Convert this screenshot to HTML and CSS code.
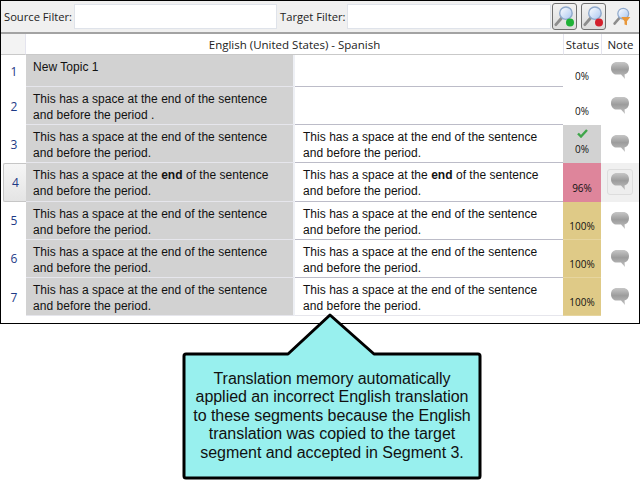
FILE: index.html
```html
<!DOCTYPE html>
<html lang="en">
<head>
  <meta charset="UTF-8" />
  <title>Translation segments</title>
  <link rel="stylesheet" href="styles.css">
</head>
<body>
  <svg class="defs" width="0" height="0">
    <defs>
      <linearGradient id="bubbleFill" x1="0" y1="0" x2="0" y2="1">
        <stop offset="0" stop-color="#c6c6c6" />
        <stop offset="0.45" stop-color="#9c9c9c" />
        <stop offset="0.8" stop-color="#b4b4b4" />
        <stop offset="1" stop-color="#c8c8c8" />
      </linearGradient>
      <linearGradient id="lensFill" x1="0" y1="0" x2="1" y2="1">
        <stop offset="0" stop-color="#ffffff" />
        <stop offset="1" stop-color="#a9c6f0" />
      </linearGradient>
      <symbol id="bubble" viewBox="0 0 20 20">
        <path d="M7 1h6c3.800 0 6 2.500 6 6.200 0 3.400-2 5.600-4.500 6.200L15 18l-4-4.400H7c-3.800 0-6-2.800-6-6.400C1 3.500 3.200 1 7 1z" fill="url(#bubbleFill)" />
      </symbol>
      <symbol id="lens" viewBox="0 0 24 24">
        <path d="M9 13L3 20" stroke="#8d8d8d" stroke-width="3" stroke-linecap="round" />
        <circle cx="13.500" cy="8" r="6.500" fill="url(#lensFill)" stroke="#8fa9cc" stroke-width="1.500" />
      </symbol>
    </defs>
  </svg>

  <div class="app">
    <div class="toolbar">
      <label class="filter-label">Source Filter:</label>
      <div class="filter-input source-input"></div>
      <label class="filter-label target-label">Target Filter:</label>
      <div class="filter-input target-input"></div>
      <button class="tool-btn">
        <svg width="24" height="24"><use href="#lens" /><circle cx="17" cy="17.500" r="4" fill="#1eb136" /></svg>
      </button>
      <button class="tool-btn">
        <svg width="24" height="24"><use href="#lens" /><circle cx="17" cy="17.500" r="4" fill="#d3202c" /></svg>
      </button>
      <span class="tool-plain">
        <svg width="20" height="20" viewBox="0 0 24 24"><use href="#lens" /><path d="M11 12h11l-4 5v5l-3-1v-4z" fill="#e8973a" /></svg>
      </span>
    </div>

    <div class="grid">
      <div class="head-gutter"></div>
      <div class="head-title">English (United States) - Spanish</div>
      <div class="head-status">Status</div>
      <div class="head-note">Note</div>

      <div class="row row-short">
        <div class="num">1</div>
        <div class="src">New Topic 1</div>
        <div class="tgt"></div>
        <div class="status"><span class="pct">0%</span></div>
        <div class="note"><svg class="bubble"><use href="#bubble" /></svg></div>
      </div>

      <div class="row">
        <div class="num">2</div>
        <div class="src">This has a space at the end of the sentence and before the period .</div>
        <div class="tgt"></div>
        <div class="status"><span class="pct">0%</span></div>
        <div class="note"><svg class="bubble"><use href="#bubble" /></svg></div>
      </div>

      <div class="row">
        <div class="num">3</div>
        <div class="src">This has a space at the end of the sentence and before the period.</div>
        <div class="tgt">This has a space at the end of the sentence and before the period.</div>
        <div class="status st-grey">
          <svg class="check" width="11" height="9" viewBox="0 0 11 9"><path d="M1 4.500l3 3L10 1" fill="none" stroke="#3fa64a" stroke-width="2.400" /></svg>
          <span class="pct">0%</span>
        </div>
        <div class="note"><svg class="bubble"><use href="#bubble" /></svg></div>
      </div>

      <div class="row row-current">
        <div class="num">4</div>
        <div class="src">This has a space at the <b>end</b> of the sentence and before the period.</div>
        <div class="tgt">This has a space at the <b>end</b> of the sentence and before the period.</div>
        <div class="status st-pink"><span class="pct">96%</span></div>
        <div class="note"><span class="note-box"><svg class="bubble"><use href="#bubble" /></svg></span></div>
      </div>

      <div class="row">
        <div class="num">5</div>
        <div class="src">This has a space at the end of the sentence and before the period.</div>
        <div class="tgt">This has a space at the end of the sentence and before the period.</div>
        <div class="status st-gold"><span class="pct">100%</span></div>
        <div class="note"><svg class="bubble"><use href="#bubble" /></svg></div>
      </div>

      <div class="row">
        <div class="num">6</div>
        <div class="src">This has a space at the end of the sentence and before the period.</div>
        <div class="tgt">This has a space at the end of the sentence and before the period.</div>
        <div class="status st-gold"><span class="pct">100%</span></div>
        <div class="note"><svg class="bubble"><use href="#bubble" /></svg></div>
      </div>

      <div class="row row-last">
        <div class="num">7</div>
        <div class="src">This has a space at the end of the sentence and before the period.</div>
        <div class="tgt">This has a space at the end of the sentence and before the period.</div>
        <div class="status st-gold"><span class="pct">100%</span></div>
        <div class="note"><svg class="bubble"><use href="#bubble" /></svg></div>
      </div>
    </div>
  </div>

  <div class="callout">
    <svg class="callout-shape" width="304" height="172" viewBox="0 0 304 172">
      <path d="M6 42H108L150 3L194 42H298a2 2 0 0 1 2 2V164a2 2 0 0 1-2 2H6a2 2 0 0 1-2-2V44a2 2 0 0 1 2-2z" fill="#98f0ee" stroke="#000" stroke-width="3" stroke-linejoin="round" />
    </svg>
    <p class="callout-text">Translation memory automatically applied an incorrect English translation to these segments because the English translation was copied to the target segment and accepted in Segment 3.</p>
  </div>
</body>
</html>
```

FILE: styles.css
```css
* { box-sizing: border-box; }
html, body {
  margin: 0;
  padding: 0;
  background: #fff;
  overflow: hidden;
}
body {
  width: 640px;
  height: 488px;
  position: relative;
  font-family: 'Liberation Sans', Arial, sans-serif;
  color: #111;
}
.defs { position: absolute; }

.app {
  height: 324px;
  border: 1px solid #000;
  background: #fff;
}

/* filter bar */
.toolbar {
  height: 33px;
  display: flex;
  align-items: center;
  background: #f0f0f0;
  border-bottom: 2px solid #a3a3a3;
  padding-left: 3px;
  font-family: 'Open Sans', sans-serif;
  font-size: 11.2px;
}
.filter-label { color: #222; }
.filter-input {
  height: 25px;
  background: #fff;
  border: 1px solid #dfe3ea;
}
.source-input { width: 203px; margin-left: 2px; }
.target-label { margin-left: 3px; }
.target-input { width: 204px; margin-left: 2px; }
.tool-btn {
  width: 25px;
  height: 27px;
  margin-left: 1px;
  padding: 0;
  display: flex;
  align-items: center;
  justify-content: center;
  background: linear-gradient(#f2f2f2, #dcdcdc);
  border: 1px solid #707070;
  border-radius: 3px;
}
.tool-btn + .tool-btn { margin-left: 4px; }
.tool-plain { margin-left: 6px; display: flex; }

/* segment table */
.grid {
  display: grid;
  grid-template-columns: 24px 538px 38px 38px;
}
.head-gutter, .head-title, .head-status, .head-note {
  height: 21px;
  display: flex;
  align-items: center;
  justify-content: center;
  font-family: 'Open Sans', sans-serif;
  font-size: 11.5px;
  color: #222;
  border-bottom: 1px solid #c9c9c9;
}
.head-gutter { background: #f3f3f3; }
.head-title, .head-status, .head-note { border-left: 1px solid #e4e4ee; }

.row {
  grid-column: 1 / -1;
  display: grid;
  grid-template-columns: 25px 269px 268px 38px 38px;
  height: 38.2px;
}
.row-short { height: 32px; }
.num {
  display: flex;
  align-items: center;
  justify-content: center;
  padding-left: 1px;
  font-family: 'Open Sans', sans-serif;
  font-size: 12px;
  color: #1d3a86;
}
.src, .tgt {
  padding: 4px 20px 0 7px;
  font-size: 12px;
  line-height: 16px;
  letter-spacing: 0.03px;
  border-bottom: 1px solid #bcbcc8;
}
.src {
  background: #d2d2d2;
  border-right: 2px solid #eef0f5;
  border-bottom-color: #e6e6ec;
}
.tgt { background: #fff; padding-left: 8px; }
.row-last .tgt { border-bottom-color: #e6e6ec; }

.status {
  display: flex;
  flex-direction: column;
  align-items: center;
  justify-content: flex-end;
  padding-bottom: 8px;
  position: relative;
}
.pct {
  font-family: 'Open Sans', sans-serif;
  font-size: 10px;
  line-height: 12px;
  color: #111;
}
.row-short .pct { margin-bottom: -3px; }
.check { position: absolute; top: 4px; left: 14px; }
.st-grey { background: #d2d2d2; }
.st-pink { background: #de859b; }
.st-gold { background: #dfca87; box-shadow: inset 0 -1px 0 #e6d59f; }

.note {
  display: flex;
  align-items: flex-start;
  justify-content: center;
  padding-top: 9px;
}
.row-short .note { padding-top: 6px; }
.bubble { width: 20px; height: 20px; display: block; }
.note-box {
  padding: 2px;
  margin-top: -3px;
  background: #eee;
  border: 1px solid #ddd;
  border-radius: 3px;
}
.row-current .note { background: #f0f0f0; }
.row-current .num {
  margin-left: 2px;
  background: linear-gradient(#f6f6f6, #e4e4e4);
  border: 1px solid #c6c6c6;
  border-right: none;
  border-radius: 2px 0 0 2px;
}

/* note over the table */
.callout {
  position: absolute;
  left: 180px;
  top: 312px;
  width: 304px;
  height: 172px;
}
.callout-shape { display: block; }
.callout-text {
  position: absolute;
  left: 12px;
  right: 12px;
  top: 58px;
  margin: 0;
  font-size: 16px;
  line-height: 18.4px;
  text-align: center;
  letter-spacing: -0.05px;
  color: #111;
}
```
